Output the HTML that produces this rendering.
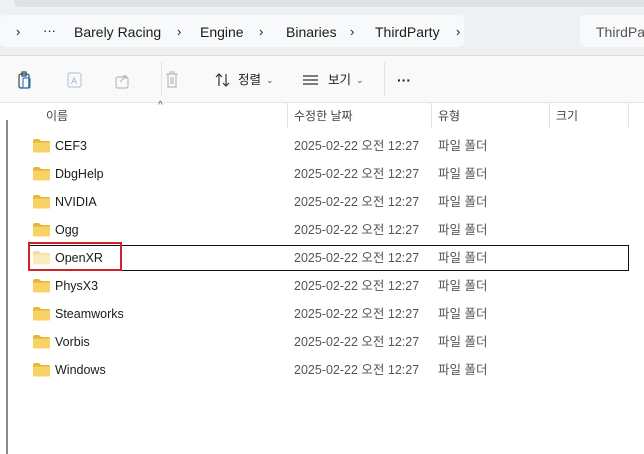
<!DOCTYPE html>
<html><head><meta charset="utf-8"><style>
body{margin:0;width:644px;height:454px;background:#fff;font-family:"Liberation Sans","Noto Sans CJK KR",sans-serif;position:relative;overflow:hidden;font-size:12.5px;color:#1b1b1b}
.a{position:absolute}
.top{left:0;top:0;width:644px;height:56px;background:#eef1f4}
.topbar{left:14px;top:-10px;width:640px;height:17px;background:#dde2e7;border-radius:6px}
.crumb{left:0;top:15px;width:464px;height:32px;background:#f7f9fb;border-radius:5px}
.crumb2{left:580px;top:15px;width:70px;height:32px;background:#f7f9fb;border-radius:5px}
.line{left:0;width:644px;height:1px;background:#dcdcdc}
.t{white-space:nowrap;line-height:16px}
.g{color:#555}
.hdr{color:#444;font-size:12px}
.sep{width:1px;background:#e3e3e3}
</style></head><body>
<div class="a top"></div>
<div class="a topbar"></div>
<div class="a crumb"></div>
<div class="a crumb2"></div>
<div class="a t" style="left:16px;top:24px;font-size:13px">›</div>
<div class="a t" style="left:43px;top:23px;font-size:13px">···</div>
<div class="a t" style="left:74px;top:24px;font-size:14px">Barely Racing</div>
<div class="a t" style="left:177px;top:24px;font-size:13px">›</div>
<div class="a t" style="left:200px;top:24px;font-size:14px">Engine</div>
<div class="a t" style="left:259px;top:24px;font-size:13px">›</div>
<div class="a t" style="left:286px;top:24px;font-size:14px">Binaries</div>
<div class="a t" style="left:350px;top:24px;font-size:13px">›</div>
<div class="a t" style="left:375px;top:24px;font-size:14px">ThirdParty</div>
<div class="a t" style="left:456px;top:24px;font-size:13px">›</div>
<div class="a t g" style="left:596px;top:24px;font-size:14px">ThirdParty</div>
<div class="a line" style="top:55px"></div>
<div class="a" style="left:0;top:56px;width:644px;height:46px;background:#f9f9f9"></div>
<svg class="a" style="left:16px;top:69px" width="170" height="22" fill="none" stroke-width="1.2">
<rect x="3" y="5" width="10" height="14" rx="2" stroke="#345"/><rect x="6" y="3" width="4" height="4" stroke="#345"/><rect x="7" y="9" width="7" height="10" rx="1" stroke="#3a7bd5"/>
<rect x="52" y="4" width="13" height="14" rx="2" stroke="#b8c8de"/><text x="55" y="15" font-size="9" fill="#9fb3d0" stroke="none">A</text>
<rect x="100" y="8" width="12" height="11" rx="2" stroke="#bbb"/><path d="M104 13 L110 7 M107 7 H110 V10" stroke="#bbb"/>
<path d="M150 5 H162 M154 5 V3 H158 V5 M152 5 V18 H160 V5 M155 8 V15 M157 8 V15" stroke="#bbb"/>
</svg>
<div class="a sep" style="left:161px;top:62px;height:34px"></div>
<svg class="a" style="left:214px;top:72px" width="20" height="16" fill="none" stroke="#333" stroke-width="1.2"><path d="M5 14 V2 M2 5 L5 2 L8 5 M12 2 V14 M9 11 L12 14 L15 11"/></svg>
<div class="a t" style="left:238px;top:72px">정렬</div>
<div class="a t g" style="left:266px;top:72px;font-size:9px">⌄</div>
<svg class="a" style="left:302px;top:72px" width="18" height="16" stroke="#333" stroke-width="1.2"><path d="M1 4 H16 M1 8 H16 M1 12 H16"/></svg>
<div class="a t" style="left:328px;top:72px">보기</div>
<div class="a t g" style="left:356px;top:72px;font-size:9px">⌄</div>
<div class="a sep" style="left:384px;top:62px;height:34px"></div>
<div class="a t" style="left:397px;top:72px;font-weight:bold;font-size:14px">···</div>
<div class="a line" style="top:102px;background:#e5e5e5"></div>
<div class="a" style="left:6px;top:120px;width:2px;height:334px;background:#8a8a8a"></div>
<div class="a t hdr" style="left:46px;top:108px">이름</div>
<div class="a t g" style="left:158px;top:98px;font-size:10px">^</div>
<div class="a sep" style="left:287px;top:103px;height:25px"></div>
<div class="a t hdr" style="left:294px;top:108px">수정한 날짜</div>
<div class="a sep" style="left:431px;top:103px;height:25px"></div>
<div class="a t hdr" style="left:438px;top:108px">유형</div>
<div class="a sep" style="left:549px;top:103px;height:25px"></div>
<div class="a t hdr" style="left:556px;top:108px">크기</div>
<div class="a sep" style="left:628px;top:103px;height:25px"></div>
<div class="a" style="left:28px;top:245px;width:599px;height:24px;border:1px solid #111"></div>
<div class="a" style="left:28px;top:242px;width:94px;height:29px;border:2px solid #d2232a;box-sizing:border-box"></div>
<div id="rows"></div>
<script>
var n=["CEF3","DbgHelp","NVIDIA","Ogg","OpenXR","PhysX3","Steamworks","Vorbis","Windows"],h="";
n.forEach(function(s,i){var y=139+i*28,op=s=="OpenXR"?0.45:1;
h+='<svg class="a" style="left:33px;top:'+y+'px;opacity:'+op+'" width="18" height="14"><path d="M0 2 Q0 0 2 0 H6 L8 2 H16 Q17 2 17 3 V13 H0Z" fill="#e8b63a"/><rect x="0" y="3.5" width="17" height="10" rx="1" fill="#f8d267"/></svg>';
h+='<div class="a t" style="left:55px;top:'+(y-1)+'px">'+s+'</div>';
h+='<div class="a t g" style="left:294px;top:'+(y-1)+'px">2025-02-22 오전 12:27</div>';
h+='<div class="a t g" style="left:438px;top:'+(y-1)+'px">파일 폴더</div>';});
document.getElementById("rows").innerHTML=h;
</script>
</body></html>
